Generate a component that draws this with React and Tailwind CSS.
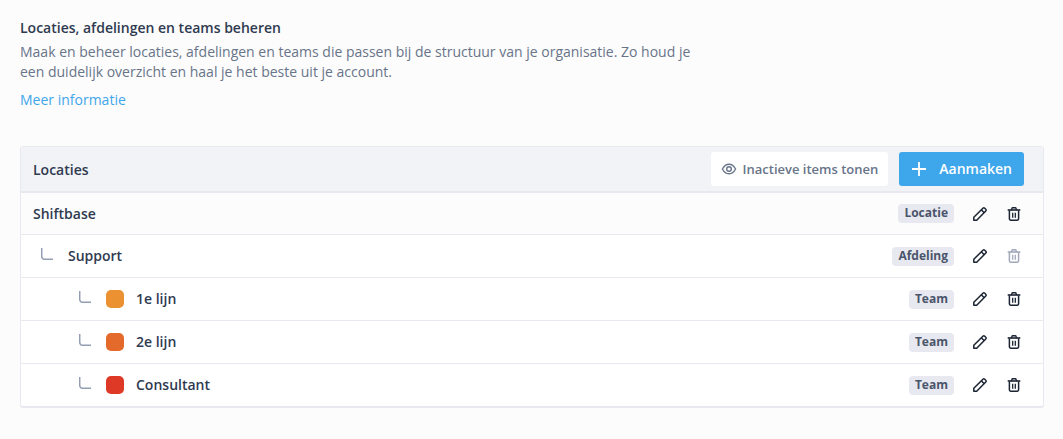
import React from 'react';

const rows = [
  { id: 1, name: 'Shiftbase', type: 'Locatie', level: 0 },
  { id: 2, name: 'Support', type: 'Afdeling', level: 1, locked: true },
  { id: 3, name: '1e lijn', type: 'Team', level: 2, color: 'bg-[#eb9131]' },
  { id: 4, name: '2e lijn', type: 'Team', level: 2, color: 'bg-[#e36a2a]' },
  { id: 5, name: 'Consultant', type: 'Team', level: 2, color: 'bg-[#de3926]' },
];

const indent = ['pl-3', 'pl-5', 'pl-[58px]'];

function BranchIcon() {
  return (
    <svg className="w-3 h-3 shrink-0 mb-1" viewBox="0 0 12 12" fill="none" stroke="#949eb3" strokeWidth="1.5" aria-hidden="true">
      <path d="M.7 0V8.3a3 3 0 0 0 3 3H12" />
    </svg>
  );
}

function PencilIcon() {
  return (
    <svg className="w-4 h-4" viewBox="0 0 16 16" fill="none" stroke="currentColor" strokeWidth="1.5" strokeLinejoin="round" aria-hidden="true">
      <path d="M1.800 14.200V11.300L10.900 2.200a1.300 1.300 0 0 1 1.800 0l1.100 1.100a1.300 1.300 0 0 1 0 1.800L4.700 14.200z" />
      <path d="M9.300 3.800l2.900 2.900" />
    </svg>
  );
}

function TrashIcon() {
  return (
    <svg className="w-4 h-4" viewBox="0 0 16 16" fill="none" stroke="currentColor" strokeWidth="1.5" strokeLinejoin="round" aria-hidden="true">
      <path d="M1.700 4h12.600" strokeWidth="1.600" />
      <path d="M5.300 4l.6-1.500a1 1 0 0 1 .9-.7h2.400a1 1 0 0 1 .9.700l.6 1.500" />
      <path d="M3.400 4.500v8.300a1.400 1.400 0 0 0 1.400 1.400h6.400a1.400 1.400 0 0 0 1.400-1.400V4.500" />
      <path d="M6.700 6.700v5M9.300 6.700v5" strokeWidth="1.300" />
    </svg>
  );
}

function EyeIcon() {
  return (
    <svg className="w-4 h-4" viewBox="0 0 16 16" fill="none" stroke="currentColor" strokeWidth="1.4" aria-hidden="true">
      <path d="M1.400 8C3 5 5.300 3.200 8 3.200S13 5 14.600 8C13 11 10.700 12.800 8 12.800S3 11 1.400 8z" strokeLinejoin="round" />
      <circle cx="8" cy="8" r="2.300" />
    </svg>
  );
}

function PlusIcon() {
  return (
    <svg className="w-4 h-4" viewBox="0 0 16 16" fill="none" stroke="currentColor" strokeWidth="1.800" aria-hidden="true">
      <path d="M8 1v14M1 8h14" />
    </svg>
  );
}

function Row({ row, first, last }) {
  const border = last ? '' : 'border-b border-[#e8e9f0]';
  return (
    <tr className={first ? 'h-[42px] bg-[#fcfcfc]' : last ? 'h-[42px]' : 'h-[43px]'}>
      <td className={`${border} ${indent[row.level]}`}>
        <div className="flex items-center">
          {row.level > 0 && <BranchIcon />}
          {row.color && <span className={`w-[18px] h-[18px] ml-[15px] rounded-[5px] ${row.color}`} />}
          <span className={row.level === 0 ? '' : row.level === 1 ? 'ml-[15px]' : 'ml-3'}>{row.name}</span>
        </div>
      </td>
      <td className={`${border} pr-[21px]`}>
        <div className="flex items-center justify-end">
          <span className="px-1.5 h-[19px] leading-[18px] rounded bg-[#e8e9f0] text-xs font-bold text-[#4a556b]">
            {row.type}
          </span>
          <button type="button" aria-label={`${row.name} bewerken`} className="ml-[18px] text-[#1b2433]">
            <PencilIcon />
          </button>
          <button
            type="button"
            aria-label={`${row.name} verwijderen`}
            disabled={row.locked}
            className="ml-[18px] text-[#1b2433] disabled:text-[#a0a8ba]"
          >
            <TrashIcon />
          </button>
        </div>
      </td>
    </tr>
  );
}

export default function App() {
  return (
    <div className="min-h-screen bg-[#fcfcfc] pl-5 pr-[19px] pt-[18px] pb-8 font-['Open_Sans',sans-serif] text-sm leading-5 text-[#2f3a50]">
      {/* Intro */}
      <h1 className="font-semibold">Locaties, afdelingen en teams beheren</h1>
      <p className="mt-1 max-w-[680px] text-[#687489]">
        Maak en beheer locaties, afdelingen en teams die passen bij de structuur van je organisatie. Zo houd je een
        duidelijk overzicht en haal je het beste uit je account.
      </p>
      <a href="#" className="mt-2 inline-block font-medium text-[#3ea6eb]">Meer informatie</a>

      {/* Locations */}
      <section className="mt-9 border border-b-2 border-[#e8e9f0] rounded-[3px] bg-white font-semibold">
        <header className="flex items-center justify-between h-[46px] pl-3 pr-[19px] border-b-2 border-[#e8e9f0] bg-[#f2f3f7]">
          <h2 className="pt-0.5">Locaties</h2>
          <div className="flex gap-[11px]">
            <button type="button" className="flex items-center gap-1.5 h-[34px] px-2.5 rounded-[3px] bg-white text-[13px] text-[#687489]">
              <EyeIcon />
              Inactieve items tonen
            </button>
            <button type="button" className="flex items-center gap-3 h-[34px] px-3 rounded-[3px] bg-[#3ea6eb] text-white">
              <PlusIcon />
              Aanmaken
            </button>
          </div>
        </header>
        <table className="w-full border-separate border-spacing-0">
          <tbody>
            {rows.map((row, i) => (
              <Row key={row.id} row={row} first={i === 0} last={i === rows.length - 1} />
            ))}
          </tbody>
        </table>
      </section>
    </div>
  );
}
